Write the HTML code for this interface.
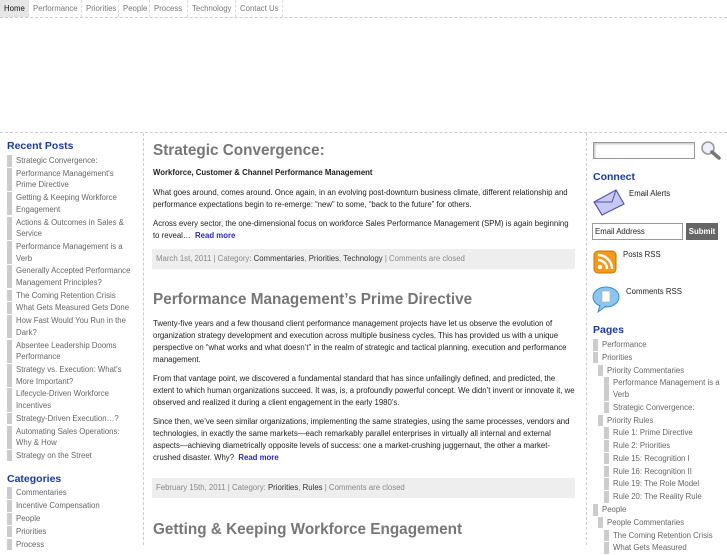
<!DOCTYPE html>
<html><head><meta charset="utf-8"><style>
*{margin:0;padding:0;box-sizing:border-box}
body{width:727px;height:545px;overflow:hidden;background:#fff;font-family:"Liberation Sans",sans-serif;color:#222;position:relative}
.nav{position:absolute;left:0;top:0;width:727px;height:18px;border-bottom:1px dashed #ccc;font-size:7.8px;color:#777}
.nav span{position:absolute;top:0;height:17px;line-height:17px;padding:0 4px;border-right:1px dashed #ddd;white-space:nowrap}
.nav span.h{background:#e6e6e6;color:#111}
.hline{position:absolute;left:0;top:132px;width:727px;border-top:1px dashed #ccc}
.vl{position:absolute;top:133px;height:412px;border-left:1px dashed #ccc}
h3{font-size:10.5px;color:#1a3c9a;font-weight:bold}
ul{list-style:none}
li{font-size:7.8px;line-height:11.6px;color:#666;border-left:5px solid #ccc;padding-left:4px;margin-bottom:1.2px}
.l2{margin-left:5px}.l3{margin-left:11px}
.main{position:absolute;left:153px;width:422px}
h2{font-size:15.3px;color:#777;font-weight:bold;line-height:20px}
p{font-size:7.8px;line-height:12px;color:#222;margin-bottom:7px}
.rm{color:#2a2ab8;font-weight:bold}
.meta{background:#eee;font-size:7.8px;color:#888;height:20px;line-height:20px;padding-left:4px}
.meta b{font-weight:normal;color:#333}
.rs{position:absolute;font-size:7.8px;color:#222}
</style></head><body>
<div class="nav">
<span class="h" style="left:0;width:29px">Home</span>
<span style="left:29px;width:53px">Performance</span>
<span style="left:82px;width:37px">Priorities</span>
<span style="left:119px;width:31px">People</span>
<span style="left:150px;width:38px">Process</span>
<span style="left:188px;width:48px">Technology</span>
<span style="left:236px;width:47px">Contact Us</span>
</div>
<div class="hline"></div>
<div class="vl" style="left:143px"></div>
<div class="vl" style="left:586px"></div>

<div style="position:absolute;left:7px;top:140px;width:127px">
<h3 style="margin-bottom:3px">Recent Posts</h3>
<ul>
<li>Strategic Convergence:</li>
<li>Performance Management's Prime Directive</li>
<li>Getting &amp; Keeping Workforce Engagement</li>
<li>Actions &amp; Outcomes in Sales &amp; Service</li>
<li>Performance Management is a Verb</li>
<li>Generally Accepted Performance Management Principles?</li>
<li>The Coming Retention Crisis</li>
<li>What Gets Measured Gets Done</li>
<li>How Fast Would You Run in the Dark?</li>
<li>Absentee Leadership Dooms Performance</li>
<li>Strategy vs. Execution: What's More Important?</li>
<li>Lifecycle-Driven Workforce Incentives</li>
<li>Strategy-Driven Execution…?</li>
<li>Automating Sales Operations: Why &amp; How</li>
<li>Strategy on the Street</li>
</ul>
<h3 style="margin-top:12px;margin-bottom:2px">Categories</h3>
<ul>
<li>Commentaries</li><li>Incentive Compensation</li><li>People</li><li>Priorities</li><li>Process</li>
</ul>
</div>

<div class="main" style="top:141px">
<h2>Strategic Convergence:</h2>
<p style="font-weight:bold;margin-top:6px;margin-bottom:8px">Workforce, Customer &amp; Channel Performance Management</p>
<p>What goes around, comes around. Once again, in an evolving post-downturn business climate, different relationship and performance expectations begin to re-emerge: “new” to some, “back to the future” for others.</p>
<p>Across every sector, the one-dimensional focus on workforce Sales Performance Management (SPM) is again beginning to reveal… &nbsp;<span class="rm">Read more</span></p>
</div>
<div class="meta main" style="top:249px;left:152px;width:423px">March 1st, 2011 | Category: <b>Commentaries</b>, <b>Priorities</b>, <b>Technology</b> | Comments are closed</div>

<div class="main" style="top:290px">
<h2>Performance Management’s Prime Directive</h2>
<p style="margin-top:8px">Twenty-five years and a few thousand client performance management projects have let us observe the evolution of organization strategy development and execution across multiple business cycles. This has provided us with a unique perspective on “what works and what doesn’t” in the realm of strategic and tactical planning, execution and performance management.</p>
<p>From that vantage point, we discovered a fundamental standard that has since unfailingly defined, and predicted, the extent to which human organizations succeed. It was, is, a profoundly powerful concept. We didn’t invent or innovate it, we observed and realized it during a client engagement in the early 1980’s.</p>
<p>Since then, we’ve seen similar organizations, implementing the same strategies, using the same processes, vendors and technologies, in exactly the same markets—each remarkably parallel enterprises in virtually all internal and external aspects—achieving diametrically opposite levels of success: one a market-crushing juggernaut, the other a market-crushed disaster. Why? &nbsp;<span class="rm">Read more</span></p>
</div>
<div class="meta main" style="top:478px;left:152px;width:423px">February 15th, 2011 | Category: <b>Priorities</b>, <b>Rules</b> | Comments are closed</div>
<div class="main" style="top:520px"><h2>Getting &amp; Keeping Workforce Engagement</h2></div>

<!-- right sidebar -->
<div style="position:absolute;left:593px;top:142px;width:102px;height:17px;border:1px solid #999;box-shadow:inset 1px 1px 2px #bbb"></div>
<svg style="position:absolute;left:700px;top:140px" width="22" height="20" viewBox="0 0 22 20"><circle cx="8" cy="8" r="6" fill="#eef" stroke="#999" stroke-width="1.6"/><path d="M12 12 L19 18" stroke="#777" stroke-width="3.5" stroke-linecap="round"/></svg>
<h3 style="position:absolute;left:593px;top:171px">Connect</h3>
<svg style="position:absolute;left:592px;top:188px" width="34" height="28" viewBox="0 0 34 28"><path d="M2 14 L24 2 L32 16 L10 27 Z" fill="#c8c8f4" stroke="#55a" stroke-width="1.2"/><path d="M2 14 L20 14 L24 2" fill="none" stroke="#55a" stroke-width="1"/></svg>
<div class="rs" style="left:629px;top:189px">Email Alerts</div>
<div style="position:absolute;left:592px;top:223px;width:91px;height:17px;border:1px solid #999;font-size:7.8px;line-height:15px;padding-left:2px;color:#222">Email Address</div>
<div style="position:absolute;left:686px;top:223px;width:32px;height:17px;background:#666;color:#fff;font-size:7.8px;font-weight:bold;line-height:17px;text-align:center">Submit</div>
<svg style="position:absolute;left:593px;top:250px" width="24" height="24" viewBox="0 0 24 24"><rect x="1" y="1" width="22" height="22" rx="4" fill="#f39a1b" stroke="#c70"/><circle cx="7" cy="17" r="2.2" fill="#fff"/><path d="M5 10 A9 9 0 0 1 14 19" fill="none" stroke="#fff" stroke-width="2.5"/><path d="M5 5 A14 14 0 0 1 19 19" fill="none" stroke="#fff" stroke-width="2.5"/></svg>
<div class="rs" style="left:623px;top:250px">Posts RSS</div>
<svg style="position:absolute;left:592px;top:285px" width="30" height="28" viewBox="0 0 30 28"><ellipse cx="14" cy="12" rx="13" ry="10" fill="#8cc6f0" stroke="#3a8ad0"/><path d="M8 20 L6 27 L14 21" fill="#8cc6f0" stroke="#3a8ad0"/><rect x="10" y="6" width="8" height="11" fill="#fff" stroke="#aaa" stroke-width=".6"/></svg>
<div class="rs" style="left:626px;top:287px">Comments RSS</div>

<div style="position:absolute;left:593px;top:324px;width:130px">
<h3 style="margin-bottom:3px">Pages</h3>
<ul>
<li>Performance</li><li>Priorities</li>
<li class="l2">Priority Commentaries</li>
<li class="l3">Performance Management is a Verb</li>
<li class="l3">Strategic Convergence:</li>
<li class="l2">Priority Rules</li>
<li class="l3">Rule 1: Prime Directive</li>
<li class="l3">Rule 2: Priorities</li>
<li class="l3">Rule 15: Recognition I</li>
<li class="l3">Rule 16: Recognition II</li>
<li class="l3">Rule 19: The Role Model</li>
<li class="l3">Rule 20: The Reality Rule</li>
<li>People</li>
<li class="l2">People Commentaries</li>
<li class="l3">The Coming Retention Crisis</li>
<li class="l3">What Gets Measured</li>
</ul>
</div>
</body></html>
